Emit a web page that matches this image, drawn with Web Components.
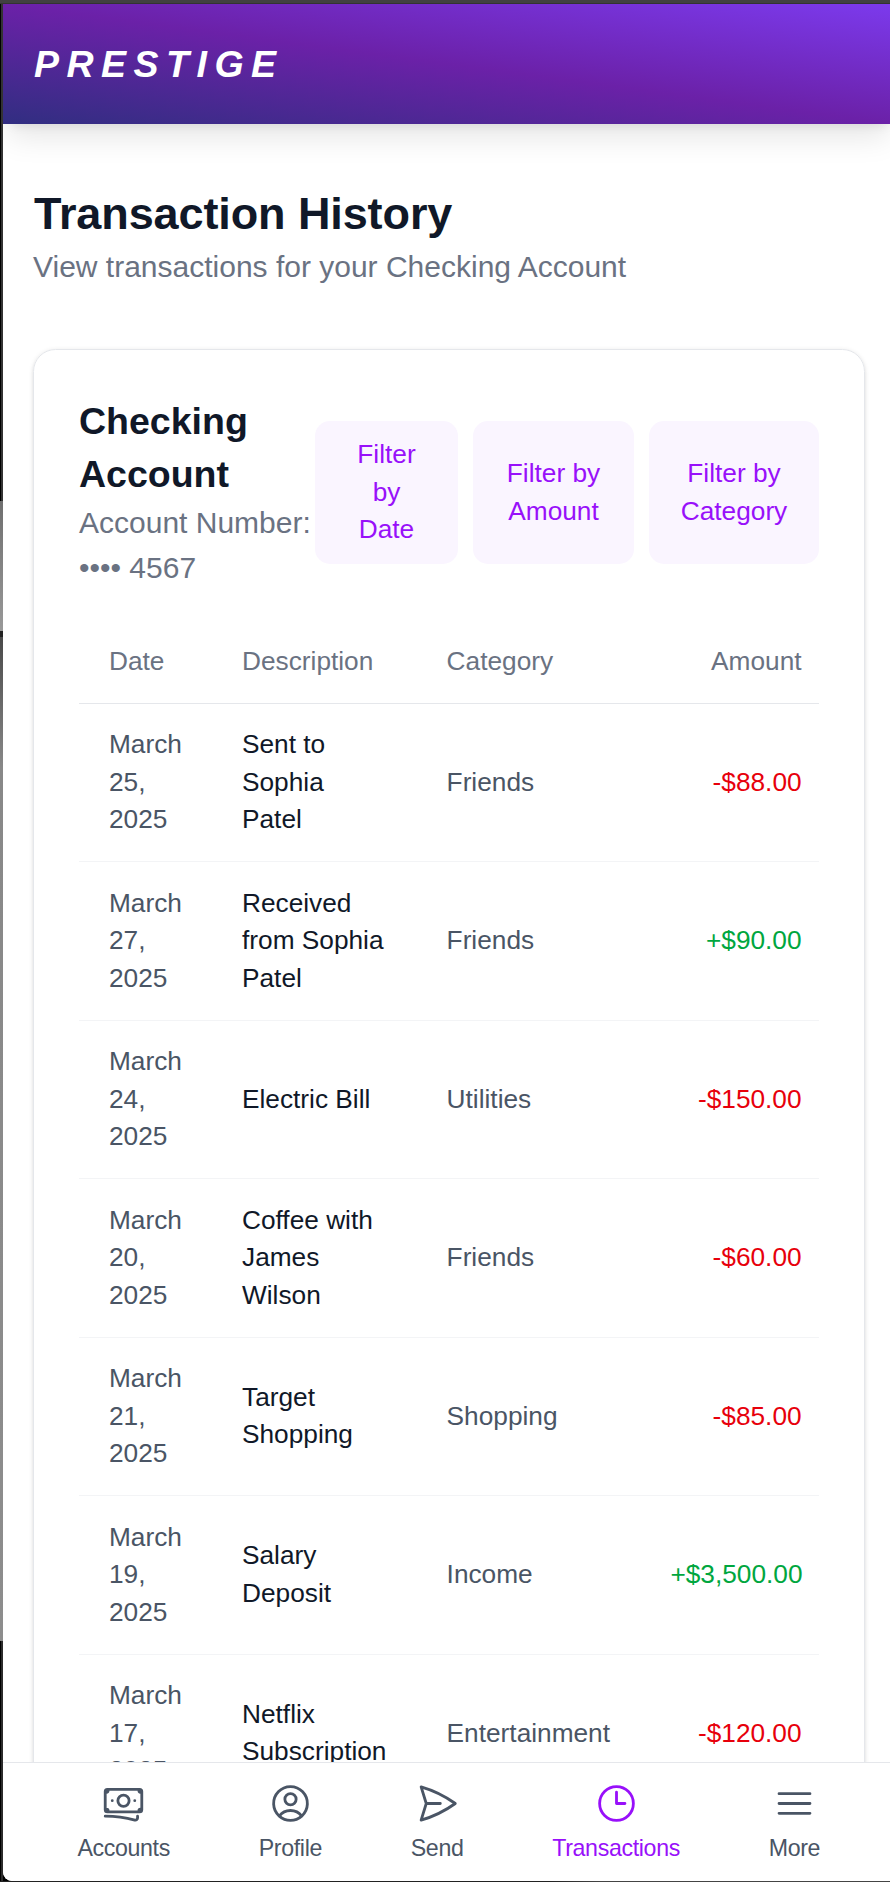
<!DOCTYPE html>
<html lang="en">
<head>
<meta charset="UTF-8">
<meta name="viewport" content="width=device-width, initial-scale=1.0">
<title>Prestige</title>
<style>
    html, body {
        margin: 0;
        height: 100%;
        overflow: hidden;
        background: #000;
        font-family: "Liberation Sans", Arial, sans-serif;
    }
</style>
</head>
<body>
<bank-app>
    <app-header slot="header">PRESTIGE</app-header>
    <page-title>
        Transaction History
        <span slot="subtitle">View transactions for your Checking Account</span>
    </page-title>
    <account-card>
        <span slot="name">Checking Account</span>
        <span slot="number">Account Number: •••• 4567</span>
        <filter-button slot="filters">Filter by Date</filter-button>
        <filter-button slot="filters">Filter by Amount</filter-button>
        <filter-button slot="filters">Filter by Category</filter-button>
        <transaction-table></transaction-table>
    </account-card>
    <nav-bar slot="nav">
        <nav-item icon="accounts">Accounts</nav-item>
        <nav-item icon="profile">Profile</nav-item>
        <nav-item icon="send">Send</nav-item>
        <nav-item icon="clock" active>Transactions</nav-item>
        <nav-item icon="menu">More</nav-item>
    </nav-bar>
</bank-app>

<script>
class BankApp extends HTMLElement {
    constructor() {
        super();
        this.attachShadow({mode: "open"}).innerHTML = `
            <style>
                :host {
                    display: grid;
                    grid-template-columns: 3px 891.5px;
                    grid-template-rows: 4px minmax(0, 1fr) 1px;
                    height: 100%;
                    overflow: hidden;
                }

                .top {
                    grid-column: 1 / -1;
                    box-sizing: border-box;
                    background: #414141;
                    border-bottom: 1px solid #333;
                }

                .side {
                    background:
                        linear-gradient(#000, #000) 0 0 / 1px 497px no-repeat,
                        linear-gradient(#333, #333) 1px 0 / 2px 497px no-repeat,
                        linear-gradient(#6f6f6f, #999) 0 497px / 3px 130px no-repeat,
                        linear-gradient(#222, #222) 0 627px / 3px 6px no-repeat,
                        linear-gradient(#4a4a4a, #888 130px, #8d8d8d) 0 633px / 3px 1004px no-repeat,
                        linear-gradient(90deg, #000 1px, #2b2b2b 1px) 0 1637px / 3px 300px no-repeat;
                }

                .screen {
                    display: flex;
                    flex-direction: column;
                    min-height: 0;
                    overflow: hidden;
                    background: #fff;
                    border-bottom-left-radius: 9px;
                }

                main {
                    flex: 1;
                    min-height: 0;
                    overflow: hidden;
                    padding: 60px 30px 0;
                }

                .bottom {
                    grid-column: 1 / -1;
                    background: linear-gradient(90deg, #222 550px, #444 600px);
                }
            </style>
            <div class="top"></div>
            <div class="side"></div>
            <div class="screen">
                <slot name="header"></slot>
                <main><slot></slot></main>
                <slot name="nav"></slot>
            </div>
            <div class="bottom"></div>`;
    }
}

class AppHeader extends HTMLElement {
    constructor() {
        super();
        this.attachShadow({mode: "open"}).innerHTML = `
            <style>
                :host {
                    display: flex;
                    align-items: center;
                    flex: none;
                    box-sizing: border-box;
                    height: 120px;
                    padding: 0 31px;
                    position: relative;
                    background: linear-gradient(to top right, #312e81, #6b21a8, #7c3aed);
                    box-shadow: 0 18.75px 28px -5.6px rgba(0, 0, 0, 0.1), 0 7.5px 11.25px -7.5px rgba(0, 0, 0, 0.1);
                    color: #fff;
                    font-size: 37.5px;
                    font-weight: 700;
                    font-style: italic;
                    letter-spacing: 0.2em;
                }
            </style>
            <slot></slot>`;
    }
}

class PageTitle extends HTMLElement {
    constructor() {
        super();
        this.attachShadow({mode: "open"}).innerHTML = `
            <style>
                :host {
                    display: block;
                    margin-bottom: 60px;
                }

                h1 {
                    margin: 0;
                    font-size: 45px;
                    line-height: 60px;
                    letter-spacing: -0.1px;
                    text-indent: 1px;
                    color: #101828;
                }

                p {
                    margin: 0;
                    font-size: 30px;
                    line-height: 45px;
                    color: #6a7282;
                }
            </style>
            <h1><slot></slot></h1>
            <p><slot name="subtitle"></slot></p>`;
    }
}

class AccountCard extends HTMLElement {
    constructor() {
        super();
        this.attachShadow({mode: "open"}).innerHTML = `
            <style>
                :host {
                    display: block;
                    padding: 45px;
                    border: 1px solid #e5e7eb;
                    border-radius: 22.5px;
                    box-shadow: 0 1.9px 5.6px rgba(0, 0, 0, 0.1), 0 1.9px 3.75px -1.9px rgba(0, 0, 0, 0.1);
                }

                .head {
                    display: flex;
                    align-items: center;
                    justify-content: space-between;
                    margin-bottom: 30px;
                }

                .info {
                    width: 236px;
                }

                h2 {
                    margin: 0;
                    font-size: 37.5px;
                    line-height: 52.5px;
                    color: #101828;
                }

                p {
                    margin: 0;
                    font-size: 30px;
                    line-height: 45px;
                    color: #6a7282;
                }

                .filters {
                    display: grid;
                    grid-template-columns: 143px 161px 170px;
                    gap: 15px;
                }
            </style>
            <div class="head">
                <div class="info">
                    <h2><slot name="name"></slot></h2>
                    <p><slot name="number"></slot></p>
                </div>
                <div class="filters"><slot name="filters"></slot></div>
            </div>
            <slot></slot>`;
    }
}

class FilterButton extends HTMLElement {
    constructor() {
        super();
        this.attachShadow({mode: "open"}).innerHTML = `
            <style>
                :host {
                    display: grid;
                }

                button {
                    padding: 15px 29px 15px 30px;
                    border: 0;
                    border-radius: 15px;
                    background: #faf5ff;
                    color: #9810fa;
                    font: 26.25px/37.5px "Liberation Sans", Arial, sans-serif;
                }
            </style>
            <button><slot></slot></button>`;
    }
}

const transactions = [
    ["March 25, 2025", "Sent to Sophia Patel", "Friends", "-$88.00"],
    ["March 27, 2025", "Received from Sophia Patel", "Friends", "+$90.00"],
    ["March 24, 2025", "Electric Bill", "Utilities", "-$150.00"],
    ["March 20, 2025", "Coffee with James Wilson", "Friends", "-$60.00"],
    ["March 21, 2025", "Target Shopping", "Shopping", "-$85.00"],
    ["March 19, 2025", "Salary Deposit", "Income", "+$3,500.00"],
    ["March 17, 2025", "Netflix Subscription", "Entertainment", "-$120.00"]
];

class TransactionTable extends HTMLElement {
    connectedCallback() {
        this.attachShadow({mode: "open"}).innerHTML = `
            <style>
                :host {
                    display: block;
                    overflow: hidden;
                    font-size: 26.25px;
                    line-height: 37.5px;
                }

                .row {
                    display: grid;
                    grid-template-columns: 133px 204.6px 223.8px 191.2px;
                    align-items: center;
                    width: 752.6px;
                    box-sizing: border-box;
                    border-bottom: 1px solid #f3f4f6;
                    color: #4a5565;
                }

                .head {
                    border-color: #e5e7eb;
                    color: #6a7282;
                }

                .row > * {
                    padding: 22.5px 30px;
                }

                .row > :last-child {
                    text-align: right;
                }

                .description {
                    color: #101828;
                }

                .debit {
                    color: #e7000b;
                }

                .credit {
                    color: #00a63e;
                }
            </style>
            <div class="row head">
                <div>Date</div>
                <div>Description</div>
                <div>Category</div>
                <div>Amount</div>
            </div>
            ${transactions.map(([date, description, category, amount]) => `
                <div class="row">
                    <div>${date}</div>
                    <div class="description">${description}</div>
                    <div>${category}</div>
                    <div class="${amount[0] === "+" ? "credit" : "debit"}">${amount}</div>
                </div>`).join("")}`;
    }
}

class NavBar extends HTMLElement {
    constructor() {
        super();
        this.attachShadow({mode: "open"}).innerHTML = `
            <style>
                :host {
                    display: flex;
                    flex: none;
                    justify-content: space-around;
                    align-items: center;
                    box-sizing: border-box;
                    height: 119px;
                    padding: 0 30px;
                    position: relative;
                    background: #fff;
                    border-top: 1px solid #e5e7eb;
                }
            </style>
            <slot></slot>`;
    }
}

const icons = {
    accounts: "M2.25 18.75a60.07 60.07 0 0 1 15.797 2.101c.727.198 1.453-.342 1.453-1.096V18.75M3.75 4.5v.75A.75.75 0 0 1 3 6h-.75m0 0v-.375c0-.621.504-1.125 1.125-1.125H20.25M2.25 6v9m18-10.5v.75c0 .414.336.75.75.75h.75m-1.5-1.5h.375c.621 0 1.125.504 1.125 1.125v9.75c0 .621-.504 1.125-1.125 1.125h-.375m1.5-1.5H21a.75.75 0 0 0-.75.75v.75m0 0H3.75m0 0h-.375a1.125 1.125 0 0 1-1.125-1.125V15m1.5 1.5v-.75A.75.75 0 0 0 3 15h-.75M15 10.5a3 3 0 1 1-6 0 3 3 0 0 1 6 0Zm3 0h.008v.008H18V10.5Zm-12 0h.008v.008H6V10.5Z",
    profile: "M17.982 18.725A7.488 7.488 0 0 0 12 15.75a7.488 7.488 0 0 0-5.982 2.975m11.963 0a9 9 0 1 0-11.963 0m11.963 0A8.966 8.966 0 0 1 12 21a8.966 8.966 0 0 1-5.982-2.275M15 9.75a3 3 0 1 1-6 0 3 3 0 0 1 6 0Z",
    send: "M6 12 3.269 3.125A59.769 59.769 0 0 1 21.485 12 59.768 59.768 0 0 1 3.27 20.875L5.999 12Zm0 0h7.5",
    clock: "M12 6v6h4.5m4.5 0a9 9 0 1 1-18 0 9 9 0 0 1 18 0Z",
    menu: "M3.75 6.75h16.5M3.75 12h16.5m-16.5 5.25h16.5"
};

class NavItem extends HTMLElement {
    connectedCallback() {
        this.attachShadow({mode: "open"}).innerHTML = `
            <style>
                :host {
                    display: flex;
                    flex-direction: column;
                    align-items: center;
                    gap: 7.5px;
                    color: #4a5565;
                    font-size: 23.2px;
                    line-height: 30px;
                    letter-spacing: -0.35px;
                }

                :host([active]) {
                    color: #9810fa;
                }

                svg {
                    width: 45px;
                    height: 45px;
                    fill: none;
                    stroke: currentColor;
                    stroke-width: 1.5;
                    stroke-linecap: round;
                    stroke-linejoin: round;
                }
            </style>
            <svg viewBox="0 0 24 24"><path d="${icons[this.getAttribute("icon")]}"/></svg>
            <span><slot></slot></span>`;
    }
}

customElements.define("bank-app", BankApp);
customElements.define("app-header", AppHeader);
customElements.define("page-title", PageTitle);
customElements.define("account-card", AccountCard);
customElements.define("filter-button", FilterButton);
customElements.define("transaction-table", TransactionTable);
customElements.define("nav-bar", NavBar);
customElements.define("nav-item", NavItem);
</script>
</body>
</html>
